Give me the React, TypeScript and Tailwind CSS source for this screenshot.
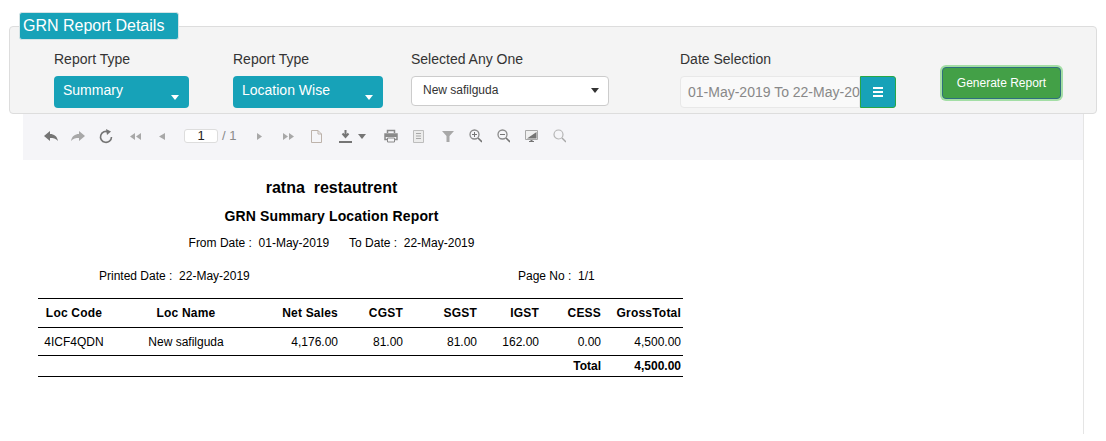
const sans = { fontFamily: '"Liberation Sans", Arial, sans-serif' };

function TealSelect({ label, value, width }: { label: string; value: string; width: string }) {
  return (
    <div className={`flex flex-col ${width}`}>
      <span className="text-[14px] leading-[20px] text-[#333] mb-[7px]">{label}</span>
      <div className="relative h-[32px] rounded-[4px] bg-[#17a2b8] text-white text-[14px] pl-[9px] pt-[4px] leading-[20px]">
        {value}
        <span className="absolute right-[10px] bottom-[8px] w-0 h-0 border-x-[4px] border-x-transparent border-t-[5px] border-t-white" />
      </div>
    </div>
  );
}

function Ico({ children, w = 14, cls = '' }: { children: React.ReactNode; w?: number; cls?: string }) {
  return (
    <svg width={w} height="16" viewBox={`0 0 ${w} 16`} className={`shrink-0 ${cls}`}>
      {children}
    </svg>
  );
}

function Toolbar() {
  return (
    <div className="h-[46px] bg-[#f5f5f8] flex items-center pl-[21px] pb-[2px]">
      <Ico w={14} cls="mr-[13px]"><path d="M0 8 L6 3 V6 C10 6 13 8 14 13 C12 10.500 9 10 6 10 V13Z" fill="#757575" /></Ico>
      <Ico w={14} cls="mr-[14px]"><path d="M14 8 L8 3 V6 C4 6 1 8 0 13 C2 10.500 5 10 8 10 V13Z" fill="#a8a8a8" /></Ico>
      <Ico w={14} cls="mr-[17px]"><path d="M9.500 4 A5.500 5.500 0 1 0 12.500 9" fill="none" stroke="#757575" strokeWidth="1.600" /><path d="M7 1 L12 3.500 L8 7Z" fill="#757575" /></Ico>
      <Ico w={11} cls="mr-[18px]"><path d="M5 5 L0 8.500 L5 12Z M11 5 L6 8.500 L11 12Z" fill="#a8a8a8" /></Ico>
      <Ico w={6} cls="mr-[19px]"><path d="M6 5 L0 8.500 L6 12Z" fill="#a8a8a8" /></Ico>
      <div className="w-[34px] h-[14px] bg-white border border-[#ddd] rounded-[3px] text-[13px] leading-[12px] text-center text-[#222] mr-[4px]">1</div>
      <span className="text-[13px] text-[#8a8a8a] mr-[21px]">/ 1</span>
      <Ico w={5} cls="mr-[21px]"><path d="M0 5 L5 8.500 L0 12Z" fill="#a8a8a8" /></Ico>
      <Ico w={11} cls="mr-[17px]"><path d="M0 5 L5 8.500 L0 12Z M6 5 L11 8.500 L6 12Z" fill="#a8a8a8" /></Ico>
      <Ico w={11} cls="mr-[17px]"><path d="M.5 2.500 H7 L10.500 6 V14.500 H.5Z M7 2.500 V6 H10.500" fill="none" stroke="#bdb3ab" /></Ico>
      <Ico w={13} cls="mr-[6px]"><path d="M6.500 2 V8 M3.500 5.500 L6.500 9 L9.500 5.500" fill="none" stroke="#757575" strokeWidth="2" /><path d="M0 13 H13 V15 H0Z" fill="#757575" /></Ico>
      <Ico w={8} cls="mr-[18px]"><path d="M0 6 H8 L4 11Z" fill="#757575" /></Ico>
      <Ico w={14} cls="mr-[15px]"><path d="M3.500 5 V2.500 H10.500 V5 M1 6 H13 V11.500 H1Z" fill="none" stroke="#8a8a8a" strokeWidth="1.500" /><path d="M1 6 H13 V9 H1Z" fill="#8a8a8a" /><path d="M3.500 10 H10.500 V14 H3.500Z" fill="#f5f5f8" stroke="#8a8a8a" /></Ico>
      <Ico w={11} cls="mr-[18px]"><path d="M.5 2.500 H10.500 V14.500 H.5Z" fill="#ececec" stroke="#bdbdbd" /><path d="M3 5.500 H8 M3 8 H8 M3 10.500 H8" stroke="#a8a8a8" /></Ico>
      <Ico w={12} cls="mr-[15px]"><path d="M0 3 H12 L7.500 8 V14 H4.500 V8Z" fill="#a8a8a8" /></Ico>
      <Ico w={13} cls="mr-[15px]"><circle cx="5.500" cy="6.500" r="4.500" fill="none" stroke="#8a8a8a" strokeWidth="1.300" /><path d="M5.500 4 V9 M3 6.500 H8" stroke="#757575" /><path d="M9 10 L13 14" stroke="#757575" strokeWidth="1.600" /></Ico>
      <Ico w={13} cls="mr-[15px]"><circle cx="5.500" cy="6.500" r="4.500" fill="none" stroke="#8a8a8a" strokeWidth="1.300" /><path d="M3 6.500 H8" stroke="#757575" /><path d="M9 10 L13 14" stroke="#757575" strokeWidth="1.600" /></Ico>
      <Ico w={13} cls="mr-[15px]"><path d="M.5 2.500 H12.500 V11.500 H.5Z" fill="#f0f0f0" stroke="#a8a8a8" /><path d="M2 10.500 L11.500 4 V10.500Z" fill="#757575" /><path d="M4 14 H9 V13 H7.500 V12 H5.500 V13 H4Z" fill="#757575" /></Ico>
      <Ico w={13}><circle cx="5.500" cy="6.500" r="4.500" fill="none" stroke="#b5b5b5" strokeWidth="1.200" /><path d="M9 10 L13 14" stroke="#a8a8a8" strokeWidth="1.500" /></Ico>
    </div>
  );
}

const cols = ['w-[72px]', 'w-[152px]', 'w-[78px]', 'w-[65px]', 'w-[74px]', 'w-[62px]', 'w-[62px]', 'w-[80px]'];
const head = ['Loc Code', 'Loc Name', 'Net Sales', 'CGST', 'SGST', 'IGST', 'CESS', 'GrossTotal'];
const row = ['4ICF4QDN', 'New safilguda', '4,176.00', '81.00', '81.00', '162.00', '0.00', '4,500.00'];

function ReportTable() {
  return (
    <table className="table-fixed w-[645px] ml-[38px] mt-[13px] border-collapse text-[12px] text-black border-y border-black">
      <colgroup>
        {cols.map((c) => (
          <col key={c + Math.random()} className={c} />
        ))}
      </colgroup>
      <thead>
        <tr className="h-[29px] border-b border-black">
          {head.map((h, i) => (
            <th key={h} className={`font-bold tracking-[0.2px] ${i < 2 ? 'text-center' : 'text-right pr-[2px]'}`}>{h}</th>
          ))}
        </tr>
      </thead>
      <tbody>
        <tr className="h-[28px] border-b border-black">
          {row.map((d, i) => (
            <td key={i} className={i < 2 ? 'text-center' : 'text-right pr-[2px]'}>{d}</td>
          ))}
        </tr>
        <tr className="h-[21px] font-bold">
          <td colSpan={6} />
          <td className="text-right pr-[2px]">Total</td>
          <td className="text-right pr-[2px]">4,500.00</td>
        </tr>
      </tbody>
    </table>
  );
}

export default function App() {
  return (
    <div className="w-[1106px] h-[441px] bg-white overflow-hidden pt-[12px]" style={sans}>
      <div className="relative z-10 ml-[19px] w-[160px] h-[28px] rounded-[3px] bg-[#17a2b8] border border-[#d5e4e6] text-white text-[16px] leading-[26px] pl-[3px] -mb-[14px]">
        GRN Report Details
      </div>
      <div className="ml-[9px] w-[1088px] h-[88px] bg-[#f4f4f4] border border-[#ddd] rounded-[4px] flex items-start pl-[44px] pt-[22px] relative">
        <TealSelect label="Report Type" value="Summary" width="w-[135px] mr-[44px]" />
        <TealSelect label="Report Type" value="Location Wise" width="w-[150px] mr-[28px]" />
        <div className="flex flex-col w-[198px] mr-[71px]">
          <span className="text-[14px] leading-[20px] text-[#333] mb-[7px]">Selected Any One</span>
          <div className="relative h-[30px] bg-white border border-[#ccc] rounded-[4px] text-[12px] leading-[26px] text-[#333] pl-[11px]">
            New safilguda
            <span className="absolute right-[9px] top-[11px] w-0 h-0 border-x-[4px] border-x-transparent border-t-[5px] border-t-[#333]" />
          </div>
        </div>
        <div className="flex flex-col w-[216px] mr-[46px]">
          <span className="text-[14px] leading-[20px] text-[#333] mb-[7px]">Date Selection</span>
          <div className="flex h-[32px]">
            <div className="w-[180px] bg-[#f9f9f9] border border-[#e8e8e8] rounded-l-[4px] text-[14px] leading-[30px] text-[#888] pl-[7px] whitespace-nowrap">
              01-May-2019 To 22-May-2019
            </div>
            <div className="w-[36px] bg-[#17a2b8] border border-[#28a745] rounded-r-[3px] flex flex-col items-center justify-center gap-[2px]">
              <span className="w-[10px] h-[2px] bg-white" />
              <span className="w-[10px] h-[2px] bg-white" />
              <span className="w-[10px] h-[2px] bg-white" />
            </div>
          </div>
        </div>
        <button className="mt-[18px] w-[119px] h-[32px] rounded-[4px] bg-[#43a047] border border-[#2f6f7e] text-white text-[12px] shadow-[0_0_0_2px_#a3dea5]">
          Generate Report
        </button>
      </div>
      <div className="ml-[23px] w-[1061px] h-[320px] border-r border-[#e5e5e5]">
        <Toolbar />
        <div className="w-[602px] text-center text-black">
          <div className="mt-[18px] text-[16px] leading-[20px] font-bold whitespace-pre ml-[15px]">ratna  restautrent</div>
          <div className="mt-[9px] text-[14px] leading-[18px] font-bold tracking-[0.15px] ml-[15px]">GRN Summary Location Report</div>
          <div className="mt-[9px] text-[12px] leading-[18px] whitespace-pre ml-[15px]">From Date :  01-May-2019      To Date :  22-May-2019</div>
        </div>
        <div className="-ml-[23px]">
          <div className="flex text-[12px] leading-[18px] text-black mt-[15px] pl-[99px] whitespace-pre">
            <span className="w-[419px]">Printed Date :  22-May-2019</span>
            <span>Page No :  1/1</span>
          </div>
          <ReportTable />
        </div>
      </div>
    </div>
  );
}
